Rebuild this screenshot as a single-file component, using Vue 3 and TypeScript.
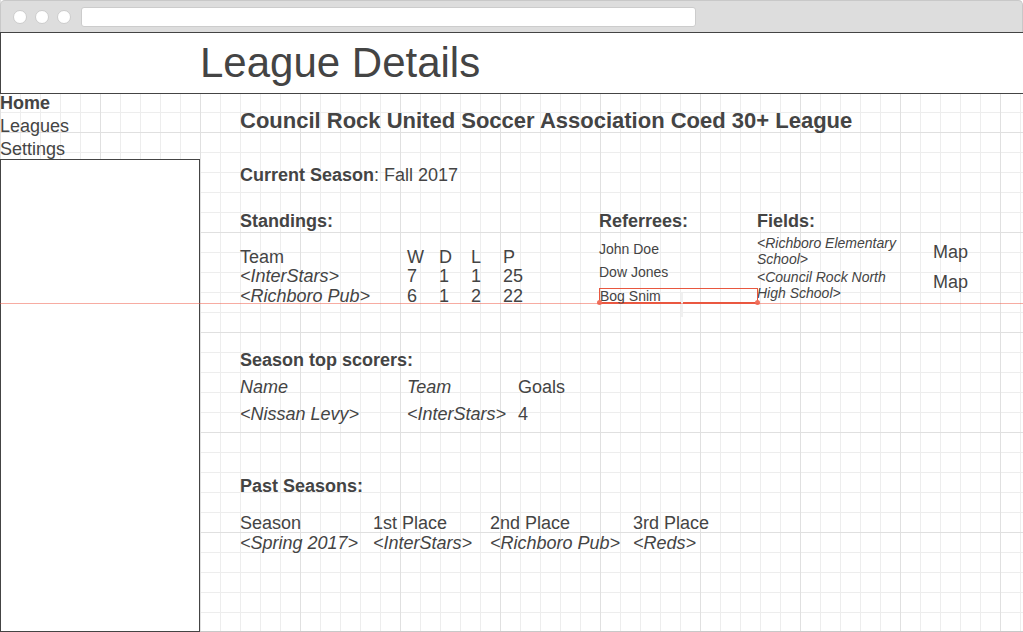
<script setup lang="ts">
interface Link { label: string; active?: boolean }
interface Standing { team: string; w: number; d: number; l: number; p: number }

const links: Link[] = [
  { label: 'Home', active: true },
  { label: 'Leagues' },
  { label: 'Settings' },
]
const standings: Standing[] = [
  { team: '<InterStars>', w: 7, d: 1, l: 1, p: 25 },
  { team: '<Richboro Pub>', w: 6, d: 1, l: 2, p: 22 },
]
const referees: string[] = ['John Doe', 'Dow Jones']
const fields: string[] = ['<Richboro Elementary School>', '<Council Rock North High School>']
const scorers = [{ name: '<Nissan Levy>', team: '<InterStars>', goals: 4 }]
const seasons = [
  { season: '<Spring 2017>', first: '<InterStars>', second: '<Richboro Pub>', third: '<Reds>' },
]
</script>

<template>
  <div class="browser">
    <div class="chrome">
      <span class="dot"></span>
      <span class="dot"></span>
      <span class="dot"></span>
      <input class="address" type="text" aria-label="Address" />
    </div>
    <header class="banner"><h1>League Details</h1></header>
    <div class="body">
      <aside class="side">
        <nav>
          <a v-for="link in links" :key="link.label" href="#" :class="{ active: link.active }">{{ link.label }}</a>
        </nav>
        <div class="panel"></div>
      </aside>
      <main>
        <h2>Council Rock United Soccer Association Coed 30+ League</h2>
        <p class="current"><b>Current Season</b>: Fall 2017</p>

        <div class="overview">
          <section class="standings">
            <h3>Standings:</h3>
            <table>
              <thead>
                <tr><th class="c-team">Team</th><th class="c-num">W</th><th class="c-num">D</th><th class="c-num">L</th><th>P</th></tr>
              </thead>
              <tbody>
                <tr v-for="row in standings" :key="row.team">
                  <td><i>{{ row.team }}</i></td><td>{{ row.w }}</td><td>{{ row.d }}</td><td>{{ row.l }}</td><td>{{ row.p }}</td>
                </tr>
              </tbody>
            </table>
          </section>
          <section class="referees">
            <h3>Referrees:</h3>
            <ul>
              <li v-for="name in referees" :key="name">{{ name }}</li>
              <li class="selected">Bog Snim<span class="stem"></span><span class="handle left"></span><span class="handle right"></span></li>
            </ul>
          </section>
          <section class="fields">
            <h3>Fields:</h3>
            <ul>
              <li v-for="field in fields" :key="field"><i>{{ field }}</i></li>
            </ul>
          </section>
          <div class="maps">
            <a v-for="field in fields" :key="field" href="#" :aria-label="'Map ' + field">Map</a>
          </div>
        </div>

        <section class="scorers">
          <h3>Season top scorers:</h3>
          <table>
            <thead>
              <tr><th class="c-team"><i>Name</i></th><th class="c-club"><i>Team</i></th><th>Goals</th></tr>
            </thead>
            <tbody>
              <tr v-for="row in scorers" :key="row.name">
                <td><i>{{ row.name }}</i></td><td><i>{{ row.team }}</i></td><td>{{ row.goals }}</td>
              </tr>
            </tbody>
          </table>
        </section>

        <section class="past">
          <h3>Past Seasons:</h3>
          <table>
            <thead>
              <tr><th class="c-season">Season</th><th class="c-first">1st Place</th><th class="c-second">2nd Place</th><th>3rd Place</th></tr>
            </thead>
            <tbody>
              <tr v-for="row in seasons" :key="row.season">
                <td><i>{{ row.season }}</i></td><td><i>{{ row.first }}</i></td><td><i>{{ row.second }}</i></td><td><i>{{ row.third }}</i></td>
              </tr>
            </tbody>
          </table>
        </section>
      </main>
    </div>
    <div class="guide"></div>
  </div>
</template>

<style>
body { margin: 0; }
</style>

<style scoped>
* { box-sizing: border-box; }
.browser {
  position: relative;
  display: flex;
  flex-direction: column;
  min-height: 100vh;
  border-bottom: 1px solid #c8c8c8;
  color: #444;
  font: 18px/20px "Liberation Sans", Arial, sans-serif;
  background:
    linear-gradient(#e0e0e0 1px, transparent 1px) 0 32px / 100px 100px,
    linear-gradient(90deg, #e0e0e0 1px, transparent 1px) 0 32px / 100px 100px,
    linear-gradient(#ededed 1px, transparent 1px) 0 32px / 20px 20px,
    linear-gradient(90deg, #ededed 1px, #fff 1px) 0 32px / 20px 20px;
}
h1, h2, h3, p, ul { margin: 0; padding: 0; }
ul { list-style: none; }
a { color: inherit; text-decoration: none; }
.chrome {
  display: flex;
  align-items: center;
  gap: 8px;
  height: 32px;
  padding: 0 0 0 12px;
  background: #ddd;
  border: 1px solid #c8c8c8;
  border-bottom: 0;
  border-radius: 5px 5px 0 0;
}
.dot { width: 14px; height: 14px; background: #fff; border: 1px solid #ccc; border-radius: 50%; }
.address {
  width: 61%;
  height: 20px;
  margin-left: 2px;
  padding: 0 6px;
  background: #fff;
  border: 1px solid #ccc;
  border-radius: 3px;
}
.banner {
  height: 62px;
  padding: 6px 0 0 199px;
  background: #fff;
  border: 1px solid #444;
  border-right: 0;
}
h1 { font-size: 42px; line-height: 48px; font-weight: 400; }
.body { display: flex; flex: 1; }
.side { display: flex; flex-direction: column; width: 200px; margin-bottom: -1px; }
nav { margin: -2px 0; }
nav a { display: block; line-height: 23px; }
nav .active { font-weight: 700; }
.panel { flex: 1; background: #fff; border: 1px solid #444; }
main { flex: 1; padding: 14px 0 0 40px; }
h2 { font-size: 22px; line-height: 26px; }
h3 { font-size: 18px; line-height: 20px; }
.current { margin-top: 31px; }
.overview { display: flex; margin-top: 26px; height: 120px; }
table { border-collapse: collapse; }
th, td { padding: 0; text-align: left; font-weight: 400; white-space: nowrap; }
.standings { width: 359px; }
.standings table { margin-top: 17px; }
.standings thead { line-height: 18px; }
.c-team { width: 167px; }
.c-num { width: 32px; }
.referees { width: 158px; }
.referees ul { margin-top: 7px; font-size: 14px; line-height: 23px; }
.selected {
  position: relative;
  width: 159px;
  height: 16px;
  margin-top: 4px;
  line-height: 14px;
  border: 1px solid #e8573f;
  border-bottom-width: 2px;
}
.handle { position: absolute; bottom: -3px; width: 5px; height: 5px; border-radius: 50%; background: #f0705c; }
.left { left: -3px; }
.right { right: -3px; }
.stem { position: absolute; left: 81px; top: 4px; width: 2px; height: 24px; background: #f0f0f0; }
.fields { width: 176px; }
.fields ul { width: 150px; margin-top: 4px; font-size: 14px; line-height: 16px; }
.fields li { margin-bottom: 2px; }
.maps { padding-top: 26px; }
.maps a { display: block; line-height: 30px; }
.scorers { margin-top: 19px; }
.scorers table { margin-top: 4px; line-height: 27px; }
.c-club { width: 111px; }
.past { margin-top: 48px; }
.past table { margin-top: 17px; }
.c-season { width: 133px; }
.c-first { width: 117px; }
.c-second { width: 143px; }
.guide { position: absolute; left: 0; right: 0; top: 303px; height: 1px; background: rgba(240, 90, 70, 0.5); }
</style>
